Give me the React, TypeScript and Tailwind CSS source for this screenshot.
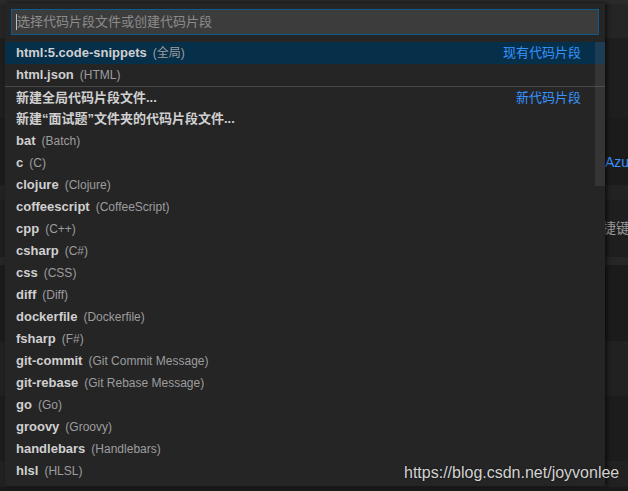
import React from "react";

const items: [string, string][] = [
  ["bat", "Batch"],
  ["c", "C"],
  ["clojure", "Clojure"],
  ["coffeescript", "CoffeeScript"],
  ["cpp", "C++"],
  ["csharp", "C#"],
  ["css", "CSS"],
  ["diff", "Diff"],
  ["dockerfile", "Dockerfile"],
  ["fsharp", "F#"],
  ["git-commit", "Git Commit Message"],
  ["git-rebase", "Git Rebase Message"],
  ["go", "Go"],
  ["groovy", "Groovy"],
  ["handlebars", "Handlebars"],
  ["hlsl", "HLSL"],
];

const FONT = "font-['Liberation_Sans','Noto_Sans_CJK_SC',sans-serif]";

function Row({
  label,
  desc,
  right,
  selected,
  border,
}: {
  label: string;
  desc?: string;
  right?: string;
  selected?: boolean;
  border?: boolean;
}) {
  return (
    <div
      className={`flex h-[22px] items-center pl-[11px] pr-[24px] text-[13px] ${
        selected ? "bg-[#062f4a]" : ""
      } ${border ? "border-t border-[#474747]" : ""}`}
    >
      <span className="font-semibold text-[#d0d0d0] whitespace-nowrap">{label}</span>
      {desc && (
        <span className="ml-[6px] text-[12px] text-[#9d9d9d] whitespace-nowrap">({desc})</span>
      )}
      {right && <span className="ml-auto text-[13px] text-[#3794ff] whitespace-nowrap">{right}</span>}
    </div>
  );
}

export default function App() {
  return (
    <div className={`relative h-[491px] w-[628px] overflow-hidden bg-[#1c1c1c] ${FONT}`}>
      {/* background editor area */}
      <div className="flex h-full flex-col">
        <div className="h-[4px] bg-[#2a2a2a]" />
        <div className="flex flex-1">
          <div className="w-[5px] bg-[#1d1d1d]" />
          <div className="flex flex-1 flex-col">
            <div className="h-[34px] bg-[#252526]" />
            <div className="h-[80px] bg-[#1e1e1e]" />
            <div className="flex h-[67px] items-end bg-[#1b1b1b] pb-[12px] pl-[605px] text-[14px] text-[#3794ff]">
              <span className="whitespace-nowrap">Azu</span>
            </div>
            <div className="h-[15px] bg-[#222222]" />
            <div className="flex h-[57px] items-center bg-[#1e1e1e] pl-[588px] text-[14px] text-[#9a9a9a]">
              <span className="whitespace-nowrap">快捷键</span>
            </div>
            <div className="h-[8px] bg-[#262626]" />
            <div className="h-[76px] bg-[#1b1b1b]" />
            <div className="h-[55px] bg-[#212121]" />
            <div className="h-[65px] bg-[#1c1c1c]" />
            <div className="h-[26px] bg-[#212121]" />
            <div className="flex-1 bg-[#1a1a1a]" />
          </div>
        </div>
      </div>

      {/* quick pick overlay */}
      <div className="absolute left-[5px] top-[3px] w-[600px] bg-[#252526] pb-[4px] shadow-[2px_0_4px_rgba(0,0,0,0.6)]">
        <div className="px-[6px] pt-[6px] pb-[7px]">
          <div className="flex h-[26px] items-center border border-[#0e5a8a] bg-[#3c3c3c] pl-[4px] text-[13px] text-[#8c8c8c]">
            <span className="h-[16px] w-px bg-[#c0c0c0]" />
            <span className="whitespace-nowrap">选择代码片段文件或创建代码片段</span>
          </div>
        </div>
        <div className="relative">
          <Row label="html:5.code-snippets" desc="全局" right="现有代码片段" selected />
          <Row label="html.json" desc="HTML" />
          <Row label="新建全局代码片段文件..." right="新代码片段" border />
          <Row label="新建“面试题”文件夹的代码片段文件..." />
          {items.map(([l, d]) => (
            <Row key={l} label={l} desc={d} />
          ))}
          <div className="absolute right-0 top-0 h-[144px] w-[10px] bg-[rgba(121,121,121,0.2)]" />
        </div>
      </div>

      {/* watermark */}
      <div className="absolute left-[404px] top-[461px] whitespace-nowrap text-[16px] text-[#d2d2d2] [text-shadow:0_0_2px_rgba(0,0,0,0.6)] font-['Liberation_Sans',sans-serif]">
        https://blog.csdn.net/joyvonlee
      </div>
    </div>
  );
}
